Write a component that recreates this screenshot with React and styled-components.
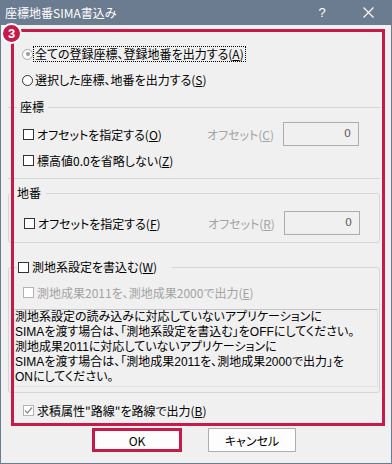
import React from 'react';
import styled, { createGlobalStyle } from 'styled-components';

const GlobalStyle = createGlobalStyle`
	html, body {
		margin: 0;
		padding: 0;
		background: #fff;
	}
	* {
		box-sizing: border-box;
	}
`;

// Styled
const Window = styled.div`
	position: relative;
	display: flex;
	flex-direction: column;
	width: 392px;
	height: 464px;
	background: #f0f0f0;
	border: 1px solid #6b7b90;
	border-top: none;
	overflow: hidden;
	font: 12px "Noto Sans CJK JP", "Noto Sans", sans-serif;
	font-feature-settings: "palt";
	color: #000;
`;

const TitleBar = styled.div`
	display: flex;
	align-items: center;
	height: 25px;
	padding-left: 4px;
	background: #6b7b90;
	color: #fff;
	font-feature-settings: normal;
`;

const Title = styled.span`
	flex: 1;
	font-size: 12px;
	line-height: 25px;
`;

const TitleButton = styled.span`
	display: flex;
	align-items: center;
	justify-content: center;
	width: 46px;
	height: 25px;
	font: 13px "Liberation Sans", sans-serif;
`;

const Body = styled.div`
	display: flex;
	flex-direction: column;
	padding: 19px 11px 0 7px;
`;

const RadioRow = styled.div`
	display: flex;
	align-items: center;
	height: 20px;
	margin-top: ${(props) => props.$mt || 0}px;
	padding-left: 14px;
`;

const RadioCircle = styled.span`
	position: relative;
	width: 11px;
	height: 11px;
	border-radius: 50%;
	background: #fff;
	border: 1px solid ${(props) => (props.$checked ? '#a8a8a8' : '#333')};

	&::after {
		content: '';
		display: ${(props) => (props.$checked ? 'block' : 'none')};
		position: absolute;
		left: 2.5px;
		top: 2.5px;
		width: 4px;
		height: 4px;
		border-radius: 50%;
		background: #9a9a9a;
	}
`;

const RadioLabel = styled.span`
	height: 16px;
	line-height: 14px;
	padding: 0 1px;
	border: 1px ${(props) => (props.$focus ? 'dotted #000' : 'solid transparent')};
	white-space: nowrap;
`;

const Group = styled.fieldset`
	margin: ${(props) => props.$mt || 0}px 0 0 0;
	padding: 0 0 ${(props) => props.$pb || 0}px 0;
	min-width: 0;
	border: 1px solid #d5d5d5;
	border-left: ${(props) => (props.$open ? 'none' : '1px solid #d5d5d5')};
	border-right: ${(props) => (props.$open ? 'none' : '1px solid #d5d5d5')};
	border-radius: ${(props) => (props.$open ? 0 : 3)}px;
`;

const Legend = styled.legend`
	height: 16px;
	margin-left: ${(props) => props.$ml}px;
	padding: 0 ${(props) => props.$pr}px 0 ${(props) => props.$pl}px;
	line-height: 16px;
`;

const LegendInner = styled.span`
	display: flex;
	align-items: center;
	gap: 3px;
	height: 16px;
	white-space: nowrap;
`;

const Row = styled.div`
	display: flex;
	align-items: center;
	height: ${(props) => props.$h || 18}px;
	margin-top: ${(props) => props.$mt || 0}px;
	padding-left: ${(props) => props.$pl || 14}px;
	white-space: nowrap;
`;

const CheckItem = styled.span`
	display: flex;
	align-items: center;
	gap: 3px;
	width: ${(props) => (props.$w ? `${props.$w}px` : 'auto')};
	color: ${(props) => (props.$disabled ? '#a3a3a3' : '#000')};
`;

const Box = styled.span`
	display: flex;
	align-items: center;
	justify-content: center;
	width: 11px;
	height: 11px;
	flex: none;
	background: #fff;
	border: 1px solid ${(props) => (props.$muted ? '#b4b4b4' : '#333')};
`;

const OffsetLabel = styled.span`
	width: 76px;
	color: #a3a3a3;
`;

const NumberField = styled.div`
	width: 76px;
	height: 24px;
	padding-right: 7px;
	border: 1px solid #adadad;
	background: #f0f0f0;
	color: #606060;
	text-align: right;
	line-height: 21px;
	font-family: "DejaVu Sans", sans-serif;
	font-size: 11px;
`;

const Note = styled.div`
	height: 78px;
	margin: 9px 1px 0 5px;
	padding: 0 0 1px 0;
	border: 1px solid #e2e2e2;
	border-top-color: #c4c4c4;
	font-family: "Liberation Sans", "Noto Sans CJK JP", sans-serif;
	line-height: 15px;
	white-space: nowrap;
`;

const NoteLine = styled.div`
	height: 15px;
`;

const ButtonRow = styled.div`
	display: flex;
	justify-content: center;
	gap: 26px;
	margin-top: 10px;
`;

const Button = styled.button`
	width: ${(props) => (props.$marked ? 90 : 88)}px;
	height: 24px;
	padding: 0;
	background: #fdfdfd;
	border: ${(props) => (props.$marked ? '3px solid #c8194b' : '1px solid #adadad')};
	font: 12px "Noto Sans CJK JP", sans-serif;
	font-feature-settings: "palt";
	color: #000;
`;

const Highlight = styled.div`
	position: absolute;
	left: 10px;
	top: 29px;
	width: 374px;
	height: 397px;
	border: 3px solid #c8194b;
	pointer-events: none;
`;

const Badge = styled.div`
	position: absolute;
	left: 0;
	top: 23px;
	display: flex;
	align-items: center;
	justify-content: center;
	width: 21px;
	height: 21px;
	border-radius: 50%;
	background: #c8194b;
	border: 2px solid #fff;
	color: #fff;
	font: bold 13px "Liberation Sans", sans-serif;
`;

const CheckMark = () => (
	<svg width="9" height="9" viewBox="0 0 9 9">
		<path d="M1 4.5 L3.5 7 L8 1.5" fill="none" stroke="#8a8a8a" strokeWidth="1.2" />
	</svg>
);

const CloseIcon = () => (
	<svg width="11" height="11" viewBox="0 0 11 11">
		<path d="M0.5 0.5 L10.5 10.5 M10.5 0.5 L0.5 10.5" stroke="#fff" strokeWidth="1.1" />
	</svg>
);

const Check = ({ children, checked, muted, disabled, width }) => (
	<CheckItem $w={width} $disabled={disabled}>
		<Box $muted={muted || disabled}>{checked && <CheckMark />}</Box>
		<span>{children}</span>
	</CheckItem>
);

const OffsetRow = ({ label, keyLetter, offsetKey, mt }) => (
	<Row $h={24} $mt={mt} $pl={15}>
		<Check width={184}>
			{label}(<u>{keyLetter}</u>)
		</Check>
		<OffsetLabel>
			オフセット(<u>{offsetKey}</u>)
		</OffsetLabel>
		<NumberField>0</NumberField>
	</Row>
);

const noteLines = [
	'測地系設定の読み込みに対応していないアプリケーションに',
	'SIMAを渡す場合は、「測地系設定を書込む」をOFFにしてください。',
	'測地成果2011に対応していないアプリケーションに',
	'SIMAを渡す場合は、「測地成果2011を、測地成果2000で出力」を',
	'ONにしてください。',
];

export default function App() {
	return (
		<>
			<GlobalStyle />
			<Window>
				<TitleBar>
					<Title>座標地番SIMA書込み</Title>
					<TitleButton>?</TitleButton>
					<TitleButton><CloseIcon /></TitleButton>
				</TitleBar>
				<Body>
					<RadioRow>
						<RadioCircle $checked />
						<RadioLabel $focus>
							全ての登録座標、登録地番を出力する(<u>A</u>)
						</RadioLabel>
					</RadioRow>
					<RadioRow $mt={6}>
						<RadioCircle />
						<RadioLabel>
							選択した座標、地番を出力する(<u>S</u>)
						</RadioLabel>
					</RadioRow>

					<Group $open $mt={9} $pb={9}>
						<Legend $ml={9} $pl={3} $pr={4}>
							<LegendInner>座標</LegendInner>
						</Legend>
						<OffsetRow label="オフセットを指定する" keyLetter="O" offsetKey="C" mt={7} />
						<Row $mt={5} $pl={15}>
							<Check>
								標高値0.0を省略しない(<u>Z</u>)
							</Check>
						</Row>
					</Group>

					<Group $mt={6} $pb={7}>
						<Legend $ml={5} $pl={3} $pr={5}>
							<LegendInner>地番</LegendInner>
						</Legend>
						<OffsetRow label="オフセットを指定する" keyLetter="F" offsetKey="R" mt={10} />
					</Group>

					<Group $mt={16} $pb={5}>
						<Legend $ml={8} $pl={1} $pr={15}>
							<LegendInner>
								<Box />
								<span>測地系設定を書込む(<u>W</u>)</span>
							</LegendInner>
						</Legend>
						<Row $h={16} $mt={9} $pl={14}>
							<Check disabled>
								測地成果2011を、測地成果2000で出力(<u>E</u>)
							</Check>
						</Row>
						<Note>
							{noteLines.map((line) => (
								<NoteLine key={line}>{line}</NoteLine>
							))}
						</Note>
					</Group>

					<Row $h={16} $mt={9} $pl={15}>
						<Check checked muted>
							求積属性"路線"を路線で出力(<u>B</u>)
						</Check>
					</Row>

					<ButtonRow>
						<Button $marked>OK</Button>
						<Button>キャンセル</Button>
					</ButtonRow>
				</Body>
				<Highlight />
				<Badge>3</Badge>
			</Window>
		</>
	);
}
